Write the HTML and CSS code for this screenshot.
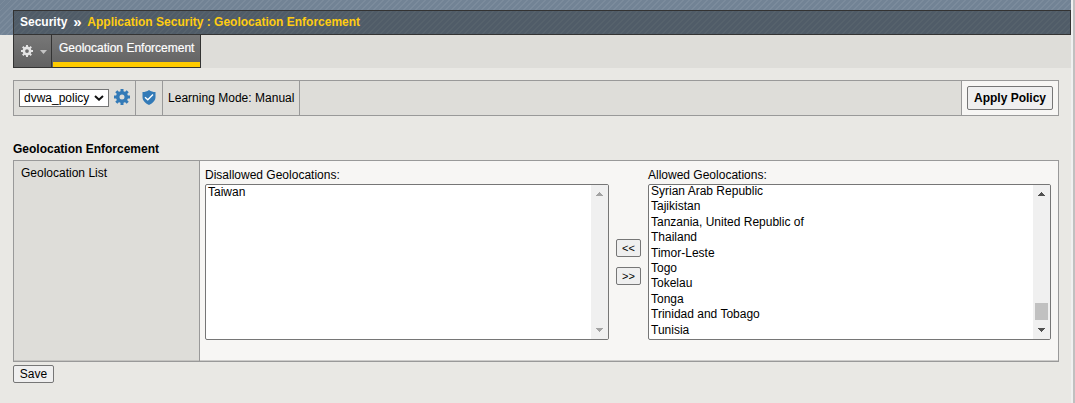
FILE: index.html
```html
<!DOCTYPE html>
<html lang="en">
<head>
<meta charset="utf-8">
<title>Geolocation Enforcement</title>
<link rel="stylesheet" href="styles.css">
</head>
<body>
<main class="page">
  <header class="banner">
    <div class="crumbs"><span>Security</span><span class="sep">»</span><span class="current">Application Security : Geolocation Enforcement</span></div>
  </header>
  <nav class="tabs">
    <div class="tab-menu">
      <svg width="12" height="12" viewBox="0 0 16 16"><g fill="none" stroke="#e4e4e4"><circle cx="8" cy="8" r="4.2" stroke-width="3.4"/><path stroke-width="2.6" d="M8 0v3M8 13v3M0 8h3M13 8h3M2.3 2.3l2.2 2.2M11.5 11.5l2.2 2.2M13.7 2.3l-2.2 2.2M4.5 11.5l-2.2 2.2"/></g></svg>
      <svg class="drop" width="7" height="4" viewBox="0 0 7 4"><path fill="#c4c4c4" d="M0 0h7L3.5 4z"/></svg>
    </div>
    <div class="tab">Geolocation Enforcement</div>
  </nav>
  <section class="toolbar">
    <div class="cell policy">
      <div class="select"><span>dvwa_policy</span><svg width="10" height="6" viewBox="0 0 10 6"><path fill="none" stroke="#111" stroke-width="2" d="M1 1l4 3.7L9 1"/></svg></div>
      <svg class="gear" width="16" height="16" viewBox="0 0 16 16"><g fill="none" stroke="#337ab7"><circle cx="8" cy="8" r="4.3" stroke-width="3.6"/><path stroke-width="3" d="M8 0v3M8 13v3M0 8h3M13 8h3M2.300 2.300l2.200 2.200M11.500 11.500l2.200 2.200M13.700 2.300l-2.200 2.200M4.500 11.500l-2.200 2.200"/></g></svg>
    </div>
    <div class="cell shield"><svg width="14" height="15" viewBox="0 0 14 15"><path fill="#337ab7" d="M7 0c2 1.500 4 2 6.500 2v5c0 3.500-2.500 6-6.500 8C3 13 .5 10.500.5 7V2C3 2 5 1.500 7 0z"/><path fill="none" stroke="#fff" stroke-width="1.400" d="M3 7.200l2.800 2.600L11 4.600"/></svg></div>
    <div class="cell mode">Learning Mode: Manual</div>
    <div class="cell apply"><button class="btn btn-apply">Apply Policy</button></div>
  </section>
  <h1 class="heading">Geolocation Enforcement</h1>
  <section class="panel">
    <div class="label">Geolocation List</div>
    <div class="lists">
      <div class="group">
        <div class="caption">Disallowed Geolocations:</div>
        <div class="listbox">
          <ul class="options"><li>Taiwan</li></ul>
          <div class="scroll disabled">
            <svg width="7" height="4" viewBox="0 0 7 4"><path d="M3 0h1v1h1v1h1v1h1v1H0V3h1V2h1V1h1z"/></svg>
            <svg width="7" height="4" viewBox="0 0 7 4"><path d="M0 0h7v1H6v1H5v1H4v1H3V3H2V2H1V1H0z"/></svg>
          </div>
        </div>
      </div>
      <div class="movers"><button class="btn move">&lt;&lt;</button><button class="btn move">&gt;&gt;</button></div>
      <div class="group allowed">
        <div class="caption">Allowed Geolocations:</div>
        <div class="listbox">
          <ul class="options scrolled"><li>Syrian Arab Republic</li><li>Tajikistan</li><li>Tanzania, United Republic of</li><li>Thailand</li><li>Timor-Leste</li><li>Togo</li><li>Tokelau</li><li>Tonga</li><li>Trinidad and Tobago</li><li>Tunisia</li></ul>
          <div class="scroll">
            <svg width="7" height="4" viewBox="0 0 7 4"><path d="M3 0h1v1h1v1h1v1h1v1H0V3h1V2h1V1h1z"/></svg>
            <div class="thumb"></div>
            <svg width="7" height="4" viewBox="0 0 7 4"><path d="M0 0h7v1H6v1H5v1H4v1H3V3H2V2H1V1H0z"/></svg>
          </div>
        </div>
      </div>
    </div>
  </section>
  <button class="btn save">Save</button>
</main>
</body>
</html>
```
FILE: styles.css
```css
* { box-sizing: border-box; }
body {
  margin: 0;
  height: 403px;
  overflow: hidden;
  background: #c0c0c0;
  color: #000;
  font: 12px/14px "Liberation Sans", Arial, sans-serif;
}
svg { display: block; flex: none; }
.page {
  width: 1073px;
  height: 403px;
  border-right: 2px solid #f0f0f0;
  background: #e9e8e4;
}
.banner {
  height: 35px;
  padding: 10px 0 0 13px;
  background: repeating-linear-gradient(135deg, #728395 0 3px, #7b8b9c 3px 4.243px);
}
.crumbs {
  display: flex;
  height: 25px;
  padding: 4px 6px;
  border: 1px solid #333;
  background: repeating-linear-gradient(135deg, #505c68 0 3px, #56626c 3px 4.243px);
  color: #fff;
  font-weight: bold;
}
.sep { width: 9px; margin: 0 5px 0 6px; font-size: 15px; }
.current { color: #fc1; }
.tabs {
  display: flex;
  height: 33px;
  margin-left: 13px;
  background: #deddd9;
}
.tab-menu {
  display: flex;
  width: 39px;
  padding: 10px 0 0 7px;
  border: solid #333;
  border-width: 0 1px 1px;
  background: linear-gradient(#777, #626262);
}
.drop { margin: 5px 0 0 7px; }
.tab {
  width: 149px;
  padding: 6px 0 0 7px;
  border: solid #333;
  border-width: 0 1px 1px 0;
  background: linear-gradient(#ffcb00, #ffcb00) 1px 100% / 100% 5px no-repeat, linear-gradient(#777, #626262);
  color: #fff;
  -webkit-text-stroke: 0.2px #fff;
  white-space: nowrap;
}
.toolbar {
  display: flex;
  width: 1046px;
  height: 36px;
  margin: 12px 0 0 13px;
  border: 1px solid #999;
  background: #deddd9;
}
.cell {
  display: flex;
  align-items: center;
  border-right: 1px solid #999;
}
.policy { width: 122px; padding-left: 5px; gap: 5px; }
.gear { margin-bottom: 2px; }
.select {
  display: flex;
  align-items: center;
  justify-content: space-between;
  width: 90px;
  height: 18px;
  padding: 0 4px;
  border: 1px solid #767676;
  background: #fff;
}
.shield { width: 27px; padding: 0 0 2px 6px; }
.mode { width: 137px; padding-left: 5px; white-space: nowrap; letter-spacing: 0.02px; }
.apply { width: 97px; margin-left: auto; padding-left: 5px; border: 0; border-left: 1px solid #999; background: #f7f6f4; }
.btn {
  display: block;
  height: 18px;
  padding: 0;
  border: 1px solid #767676;
  border-radius: 2px;
  background: #efefef;
  color: #000;
  font: 12px/14px "Liberation Sans", Arial, sans-serif;
  white-space: nowrap;
}
.btn-apply { width: 86px; height: 24px; font-weight: bold; }
.heading { margin: 26px 0 4px 13px; font-size: 12px; line-height: 14px; }
.panel {
  display: flex;
  width: 1046px;
  height: 202px;
  margin: 0 0 3px 13px;
  border: 1px solid #999;
  background: #f7f6f4;
  box-shadow: inset 0 -1px #cdccca;
}
.label { width: 186px; padding: 5px 7px; border-right: 1px solid #999; background: #deddd9; box-shadow: inset 0 -1px #c4c3c0; }
.lists { display: flex; padding: 7px 0 0 5px; }
.group { width: 404px; }
.allowed { width: 403px; }
.caption { height: 16px; }
.listbox {
  display: flex;
  height: 156px;
  border: 1px solid #767676;
  border-radius: 2px;
  background: #fff;
  overflow: hidden;
}
.options { flex: 1; margin: 0; padding: 0 2px; list-style: none; line-height: 15.4px; }
.scrolled { margin-top: -1px; }
.scroll {
  display: flex;
  flex-direction: column;
  align-items: center;
  justify-content: space-between;
  width: 17px;
  padding: 7px 0;
  background: #f0f0f0;
  fill: #505050;
}
.disabled { fill: #a3a3a3; }
.thumb {
  width: 13px;
  height: 17px;
  margin-top: 99px;
  background: #c1c1c1;
}
.movers { display: flex; flex-direction: column; gap: 10px; width: 39px; padding: 71px 7px 0; }
.move { width: 25px; font-size: 11px; }
.save { width: 41px; margin-left: 13px; }
```
